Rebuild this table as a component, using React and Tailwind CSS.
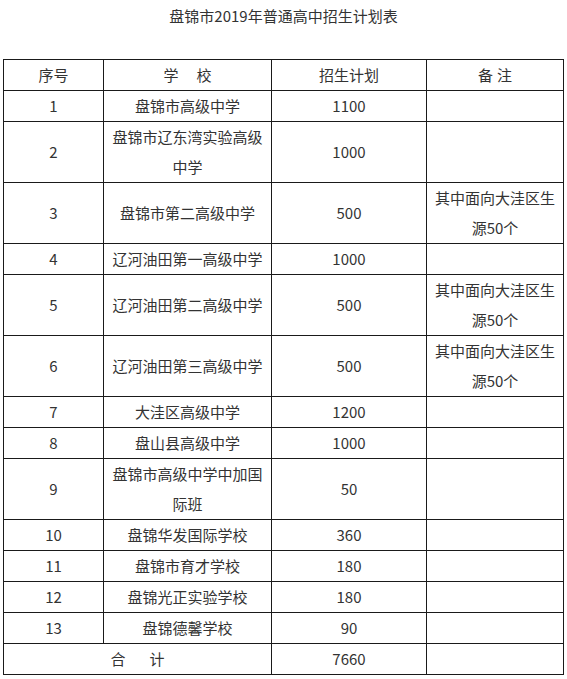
import React from 'react';

const rows = [
  { no: '1', name: ['盘锦市高级中学'], plan: '1100' },
  { no: '2', name: ['盘锦市辽东湾实验高级', '中学'], plan: '1000' },
  { no: '3', name: ['盘锦市第二高级中学'], plan: '500', note: ['其中面向大洼区生', '源50个'] },
  { no: '4', name: ['辽河油田第一高级中学'], plan: '1000' },
  { no: '5', name: ['辽河油田第二高级中学'], plan: '500', note: ['其中面向大洼区生', '源50个'] },
  { no: '6', name: ['辽河油田第三高级中学'], plan: '500', note: ['其中面向大洼区生', '源50个'] },
  { no: '7', name: ['大洼区高级中学'], plan: '1200' },
  { no: '8', name: ['盘山县高级中学'], plan: '1000' },
  { no: '9', name: ['盘锦市高级中学中加国', '际班'], plan: '50' },
  { no: '10', name: ['盘锦华发国际学校'], plan: '360' },
  { no: '11', name: ['盘锦市育才学校'], plan: '180' },
  { no: '12', name: ['盘锦光正实验学校'], plan: '180' },
  { no: '13', name: ['盘锦德馨学校'], plan: '90' },
];

function Lines({ lines }) {
  if (!lines) return null;
  return lines.map((l, i) => (
    <React.Fragment key={i}>
      {i > 0 && <br />}
      {l}
    </React.Fragment>
  ));
}

const cell = 'border border-[#1a1a1a] text-center align-middle p-0';

export default function App() {
  return (
    <div
      className="w-[567px] h-[679px] bg-white text-[#333] text-[15px] leading-[30px]"
      style={{ fontFamily: '"Noto Sans CJK SC", "Noto Sans", sans-serif' }}
    >
      <div className="pt-px text-center">盘锦市2019年普通高中招生计划表</div>

      <table className="ml-[3px] mt-[28px] w-[560px] border-collapse table-fixed">
        <colgroup>
          <col className="w-[100px]" />
          <col className="w-[168px]" />
          <col className="w-[155px]" />
          <col className="w-[137px]" />
        </colgroup>
        <thead>
          <tr>
            <th className={`${cell} font-normal`}>序号</th>
            <th className={`${cell} font-normal`}>
              学<span className="inline-block w-[18px]" />校
            </th>
            <th className={`${cell} font-normal`}>招生计划</th>
            <th className={`${cell} font-normal`}>
              备<span className="inline-block w-[4px]" />注
            </th>
          </tr>
        </thead>
        <tbody>
          {rows.map((r) => (
            <tr key={r.no}>
              <td className={cell}>{r.no}</td>
              <td className={cell}>
                <Lines lines={r.name} />
              </td>
              <td className={cell}>{r.plan}</td>
              <td className={cell}>
                <Lines lines={r.note} />
              </td>
            </tr>
          ))}
          <tr>
            <td className={cell} colSpan={2}>
              合<span className="inline-block w-[24px]" />计
            </td>
            <td className={cell}>7660</td>
            <td className={cell}></td>
          </tr>
        </tbody>
      </table>
    </div>
  );
}
